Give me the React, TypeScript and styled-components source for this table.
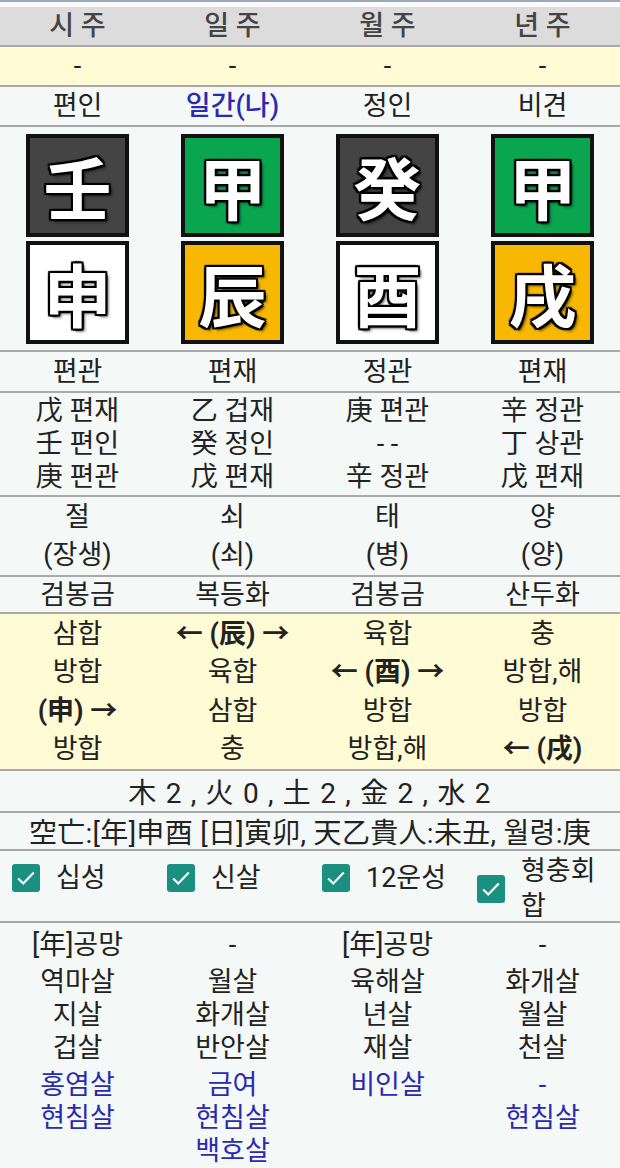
import React from "react";
import styled, { createGlobalStyle } from "styled-components";

const GlobalStyle = createGlobalStyle`
  html, body { margin: 0; padding: 0; }
  body {
    background: #f4f8f6;
    font-family: Roboto, "Noto Sans CJK KR", sans-serif;
    color: #222;
  }
`;

const Page = styled.div`
  width: 620px;
  display: flex;
  flex-direction: column;
`;

const TopStrip = styled.div`
  height: 5px;
  background: #fbfbfb;
  border-top: 2px solid #9aa7b6;
`;

const Row = styled.div<{ $bg?: string; $h?: number }>`
  display: grid;
  grid-template-columns: repeat(4, 1fr);
  background: ${(p) => p.$bg || "#f4f8f6"};
  border-bottom: 2px solid #a9a9a9;
  ${(p) => (p.$h ? `height: ${p.$h}px;` : "")}
  box-sizing: border-box;
`;

const Cell = styled.div<{ $color?: string; $lh?: number; $weight?: number }>`
  display: flex;
  flex-direction: column;
  align-items: center;
  justify-content: center;
  font-size: 27px;
  line-height: ${(p) => p.$lh || 32}px;
  color: ${(p) => p.$color || "#222"};
  font-weight: ${(p) => p.$weight || 400};
  white-space: nowrap;
`;

const HeaderCell = styled(Cell)`
  color: #444;
  font-weight: 500;
`;

const Pillar = styled.div`
  display: flex;
  flex-direction: column;
  align-items: center;
  gap: 4px;
  padding: 7px 0 6px;
`;

const CharBox = styled.div<{ $bg: string }>`
  width: 103px;
  height: 103px;
  box-sizing: border-box;
  border: 4px solid #111;
  background: ${(p) => p.$bg};
  display: flex;
  align-items: center;
  justify-content: center;
  font-family: "Noto Sans CJK KR", "Noto Sans CJK SC", sans-serif;
  font-size: 68px;
  font-weight: 600;
  color: #fff;
  line-height: 1;
  text-shadow:
    0 0 3px #000,
    2px 0 0 #000, -2px 0 0 #000, 0 2px 0 #000, 0 -2px 0 #000,
    2px 2px 1px #000, -2px -2px 1px #000, 2px -2px 1px #000, -2px 2px 1px #000,
    3px 3px 3px rgba(0,0,0,0.6);
`;

const Line = styled.span<{ $bold?: boolean }>`
  font-weight: ${(p) => (p.$bold ? 700 : 400)};
`;

const WideRow = styled.div<{ $h: number; $ls?: number }>`
  height: ${(p) => p.$h}px;
  box-sizing: border-box;
  display: flex;
  align-items: center;
  justify-content: center;
  font-size: 28px;
  letter-spacing: ${(p) => p.$ls || 0}px;
  border-bottom: 2px solid #a9a9a9;
  white-space: nowrap;
`;

const CheckRow = styled.div`
  display: grid;
  grid-template-columns: repeat(4, 1fr);
  align-items: start;
  height: 72px;
  box-sizing: border-box;
  border-bottom: 2px solid #a9a9a9;
`;

const CheckItem = styled.label<{ $multi?: boolean }>`
  display: flex;
  align-items: center;
  gap: 16px;
  padding-left: 12px;
  margin-top: ${(p) => (p.$multi ? 3 : 12)}px;
  font-size: 27px;
  line-height: ${(p) => (p.$multi ? 35 : 30)}px;
`;

const Box = styled.span`
  flex: none;
  width: 28px;
  height: 28px;
  border-radius: 3px;
  background: #1a9080;
  display: flex;
  align-items: center;
  justify-content: center;
`;

const ShinsalGrid = styled.div`
  display: grid;
  grid-template-columns: repeat(4, 1fr);
  padding-top: 6px;
`;

const ShinsalCol = styled.div`
  display: flex;
  flex-direction: column;
  align-items: center;
  font-size: 27px;
  line-height: 33px;
  white-space: nowrap;
`;

const Group = styled.div<{ $blue?: boolean }>`
  display: flex;
  flex-direction: column;
  align-items: center;
  margin-top: 4px;
  color: ${(p) => (p.$blue ? "#2a2ab0" : "#222")};
`;

const Check = () => (
  <svg width="22" height="22" viewBox="0 0 24 24">
    <path d="M3.5 12.5l5.5 5.5L20.5 6" fill="none" stroke="#fff" strokeWidth="2.4" />
  </svg>
);

const pillars = [
  { stem: "壬", sbg: "#444444", branch: "申", bbg: "#ffffff" },
  { stem: "甲", sbg: "#0aa54f", branch: "辰", bbg: "#f8b700" },
  { stem: "癸", sbg: "#444444", branch: "酉", bbg: "#ffffff" },
  { stem: "甲", sbg: "#0aa54f", branch: "戌", bbg: "#f8b700" },
];

const hidden = [
  ["戊 편재", "壬 편인", "庚 편관"],
  ["乙 겁재", "癸 정인", "戊 편재"],
  ["庚 편관", "- -", "辛 정관"],
  ["辛 정관", "丁 상관", "戊 편재"],
];

const relations: [string, boolean][][] = [
  [["삼합", false], ["방합", false], ["(申) →", true], ["방합", false]],
  [["← (辰) →", true], ["육합", false], ["삼합", false], ["충", false]],
  [["육합", false], ["← (酉) →", true], ["방합", false], ["방합,해", false]],
  [["충", false], ["방합,해", false], ["방합", false], ["← (戌)", true]],
];

const shinsal = [
  { top: "[年]공망", black: ["역마살", "지살", "겁살"], blue: ["홍염살", "현침살"] },
  { top: "-", black: ["월살", "화개살", "반안살"], blue: ["금여", "현침살", "백호살"] },
  { top: "[年]공망", black: ["육해살", "년살", "재살"], blue: ["비인살"] },
  { top: "-", black: ["화개살", "월살", "천살"], blue: ["-", "현침살"] },
];

export default function App() {
  return (
    <>
      <GlobalStyle />
      <Page>
        <TopStrip />
        <Row $bg="#dcdcdc" $h={40}>
          {["시 주", "일 주", "월 주", "년 주"].map((t) => (
            <HeaderCell key={t}>{t}</HeaderCell>
          ))}
        </Row>
        <Row $bg="#fffbd4" $h={40}>
          {[0, 1, 2, 3].map((i) => (
            <Cell key={i}>-</Cell>
          ))}
        </Row>
        <Row $h={40}>
          <Cell>편인</Cell>
          <Cell $color="#2a2ab0" $weight={500}>일간(나)</Cell>
          <Cell>정인</Cell>
          <Cell>비견</Cell>
        </Row>
        <Row>
          {pillars.map((p, i) => (
            <Pillar key={i}>
              <CharBox $bg={p.sbg}>{p.stem}</CharBox>
              <CharBox $bg={p.bbg}>{p.branch}</CharBox>
            </Pillar>
          ))}
        </Row>
        <Row $h={41}>
          {["편관", "편재", "정관", "편재"].map((t, i) => (
            <Cell key={i}>{t}</Cell>
          ))}
        </Row>
        <Row $h={104}>
          {hidden.map((col, i) => (
            <Cell key={i} $lh={33}>
              {col.map((l, j) => (
                <Line key={j}>{l}</Line>
              ))}
            </Cell>
          ))}
        </Row>
        <Row $h={80}>
          {[["절", "(장생)"], ["쇠", "(쇠)"], ["태", "(병)"], ["양", "(양)"]].map((col, i) => (
            <Cell key={i} $lh={38}>
              {col.map((l, j) => (
                <Line key={j}>{l}</Line>
              ))}
            </Cell>
          ))}
        </Row>
        <Row $h={37}>
          {["검봉금", "복등화", "검봉금", "산두화"].map((t, i) => (
            <Cell key={i}>{t}</Cell>
          ))}
        </Row>
        <Row $bg="#fffbd4" $h={157}>
          {relations.map((col, i) => (
            <Cell key={i} $lh={38.5}>
              {col.map(([t, b], j) => (
                <Line key={j} $bold={b}>{t}</Line>
              ))}
            </Cell>
          ))}
        </Row>
        <WideRow $h={42} $ls={1.2}>木 2 , 火 0 , 土 2 , 金 2 , 水 2</WideRow>
        <WideRow $h={38} $ls={0.3}>空亡:[年]申酉 [日]寅卯, 天乙貴人:未丑, 월령:庚</WideRow>
        <CheckRow>
          <CheckItem><Box><Check /></Box>십성</CheckItem>
          <CheckItem><Box><Check /></Box>신살</CheckItem>
          <CheckItem><Box><Check /></Box>12운성</CheckItem>
          <CheckItem $multi><Box><Check /></Box>형충회<br />합</CheckItem>
        </CheckRow>
        <ShinsalGrid>
          {shinsal.map((c, i) => (
            <ShinsalCol key={i}>
              <span>{c.top}</span>
              <Group>
                {c.black.map((t, j) => <span key={j}>{t}</span>)}
              </Group>
              <Group $blue>
                {c.blue.map((t, j) => <span key={j}>{t}</span>)}
              </Group>
            </ShinsalCol>
          ))}
        </ShinsalGrid>
      </Page>
    </>
  );
}
